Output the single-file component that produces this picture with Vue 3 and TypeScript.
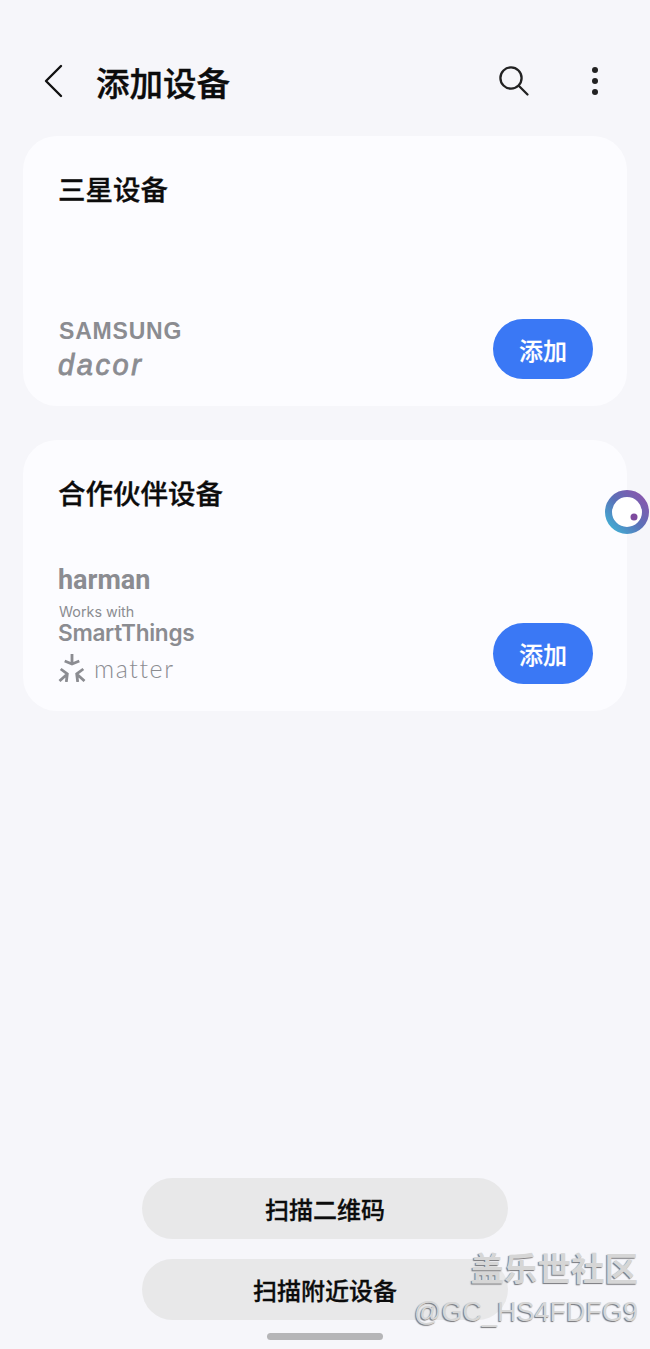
<script setup lang="ts">
const cards = [
  { id: 'samsung', title: '三星设备' },
  { id: 'partner', title: '合作伙伴设备' },
]
</script>

<template>
  <div class="page">
    <header class="header">
      <svg class="back" width="20" height="34" viewBox="0 0 20 34" fill="none">
        <path d="M17 2 2 17l15 15" stroke="#111" stroke-width="2.4" stroke-linecap="round" stroke-linejoin="round" />
      </svg>
      <h1 class="heading">添加设备</h1>
      <svg class="search" width="32" height="32" viewBox="0 0 32 32" fill="none">
        <circle cx="13" cy="13" r="10.6" stroke="#222" stroke-width="2.3" />
        <path d="m21 21 8.500 8.500" stroke="#222" stroke-width="2.3" stroke-linecap="round" />
      </svg>
      <div class="more"><i></i><i></i><i></i></div>
    </header>

    <section v-for="card in cards" :key="card.id" class="card">
      <h2 class="card-title">{{ card.title }}</h2>
      <div class="card-foot">
        <div v-if="card.id === 'samsung'" class="logos">
          <span class="samsung">SAMSUNG</span>
          <span class="dacor">dacor</span>
        </div>
        <div v-else class="logos partner">
          <span class="harman">harman</span>
          <span class="works">Works with</span>
          <span class="smart">SmartThings</span>
          <span class="matter">
            <svg width="28" height="28" viewBox="0 0 28 28" fill="none" stroke="#8b8c91" stroke-width="2.8">
              <path d="M14 0v10M6.700 7l7.300 3 7.300-3" />
              <path d="M2.700 15l6.600 5-1 8M9.300 20l-7.800 7" />
              <path d="M25.300 15l-6.600 5 1 8M18.700 20l7.800 7" />
            </svg>
            <span class="matter-text">matter</span>
          </span>
        </div>
        <button class="add" type="button">添加</button>
      </div>
    </section>

    <div class="actions">
      <button class="action" type="button">扫描二维码</button>
      <button class="action" type="button">扫描附近设备</button>
      <div class="home-bar"></div>
    </div>

    <svg class="float-ball" width="46" height="46" viewBox="0 0 46 46">
      <defs>
        <linearGradient id="ring" x1="0" y1="1" x2="1" y2="0">
          <stop offset="0" stop-color="#3fb4d6" />
          <stop offset="0.5" stop-color="#5b70b8" />
          <stop offset="1" stop-color="#8d54ac" />
        </linearGradient>
      </defs>
      <circle cx="23" cy="23" r="18.500" fill="#fff" stroke="url(#ring)" stroke-width="7" />
      <circle cx="30" cy="28" r="3.500" fill="#7d4a9e" />
    </svg>

    <div class="watermark">
      <div class="wm-name">盖乐世社区</div>
      <div class="wm-user">@GC_HS4FDFG9</div>
    </div>
  </div>
</template>

<style scoped>
.page {
  position: relative;
  display: flex;
  flex-direction: column;
  height: 1349px;
  overflow: hidden;
  padding: 0 23px;
  box-sizing: border-box;
  background: #f6f6fa;
  font-family: "Noto Sans CJK SC", "Liberation Sans", sans-serif;
  color: #0c0c0c;
}

.header {
  display: flex;
  align-items: center;
  height: 136px;
  padding: 28px 0 0 21px;
  box-sizing: border-box;
}

.back {
  flex: none;
  margin-top: -3px;
}

.heading {
  flex: 1;
  margin: 0 0 0 32px;
  font-size: 33.500px;
  font-weight: 500;
  line-height: 40px;
  -webkit-text-stroke: 0.4px #0c0c0c;
}

.search {
  flex: none;
  margin-top: -2px;
}

.more {
  display: flex;
  flex-direction: column;
  gap: 5px;
  margin: -2px 29px 0 62px;
}

.more i {
  width: 6px;
  height: 6px;
  border-radius: 50%;
  background: #222;
}

.card {
  display: flex;
  flex-direction: column;
  justify-content: space-between;
  height: 270px;
  margin-bottom: 34px;
  padding: 34px 34px 27px 35px;
  box-sizing: border-box;
  border-radius: 34px;
  background: #fcfcff;
}

.card + .card {
  height: 271px;
}

.card + .card .add {
  height: 61px;
}

.card-title {
  margin: 0;
  font-size: 27.500px;
  font-weight: 500;
  line-height: 36px;
  -webkit-text-stroke: 0.3px #0c0c0c;
}

.card-foot {
  display: flex;
  justify-content: space-between;
  align-items: flex-end;
}

.logos {
  display: flex;
  flex-direction: column;
  align-items: flex-start;
  margin-bottom: -1px;
  color: #8b8c91;
  font-family: "Liberation Sans", sans-serif;
}

.logos.partner {
  margin-bottom: 2px;
}

.samsung {
  margin: 0 0 6px 1px;
  font-size: 23px;
  font-weight: 700;
  letter-spacing: 0.800px;
  line-height: 27px;
}

.dacor {
  font-size: 29px;
  font-style: italic;
  font-weight: 400;
  letter-spacing: 2.600px;
  line-height: 29px;
  -webkit-text-stroke: 0.8px #8b8c91;
}

.harman {
  font-family: Roboto, sans-serif;
  font-size: 27px;
  font-weight: 700;
  line-height: 30px;
}

.works {
  margin: 9px 0 0 1px;
  font-family: Inter, sans-serif;
  font-size: 14.300px;
  line-height: 16px;
}

.smart {
  font-family: Inter, sans-serif;
  font-size: 22.600px;
  font-weight: 600;
  letter-spacing: -0.300px;
  line-height: 26px;
}

.matter {
  display: flex;
  align-items: center;
  gap: 8px;
  margin-top: 8px;
}

.matter-text {
  font-family: Lato, sans-serif;
  font-size: 25px;
  font-weight: 300;
  letter-spacing: 1.600px;
  line-height: 28px;
}

.add {
  width: 100px;
  height: 60px;
  padding: 0;
  border: none;
  border-radius: 31px;
  background: #3a78f5;
  color: #fff;
  font-family: inherit;
  font-size: 24px;
  font-weight: 500;
  -webkit-text-stroke: 0.2px #fff;
}

.actions {
  display: flex;
  flex-direction: column;
  align-items: center;
  margin-top: auto;
  padding-bottom: 9px;
}

.action {
  width: 366px;
  height: 61px;
  margin-bottom: 20px;
  padding: 0;
  border: none;
  border-radius: 31px;
  background: #e8e8e9;
  color: #0c0c0c;
  font-family: inherit;
  font-size: 24px;
  font-weight: 500;
  -webkit-text-stroke: 0.3px #0c0c0c;
}

.action:last-of-type {
  margin-bottom: 13px;
}

.home-bar {
  width: 116px;
  height: 7px;
  border-radius: 4px;
  background: #b5b5b7;
}

.float-ball {
  position: absolute;
  top: 489px;
  left: 604px;
}

.watermark {
  position: absolute;
  right: 12px;
  top: 1245px;
  display: flex;
  flex-direction: column;
  align-items: flex-end;
  color: #d6d6d6;
  text-shadow: -1px 1px 1px #77777a;
}

.wm-name {
  font-size: 33.500px;
  font-weight: 700;
  line-height: 44px;
}

.wm-user {
  margin-top: 5px;
  font-family: "Liberation Sans", sans-serif;
  font-size: 27px;
  line-height: 36px;
}
</style>

<style>
html,
body {
  margin: 0;
  background: #f6f6fa;
}
</style>
